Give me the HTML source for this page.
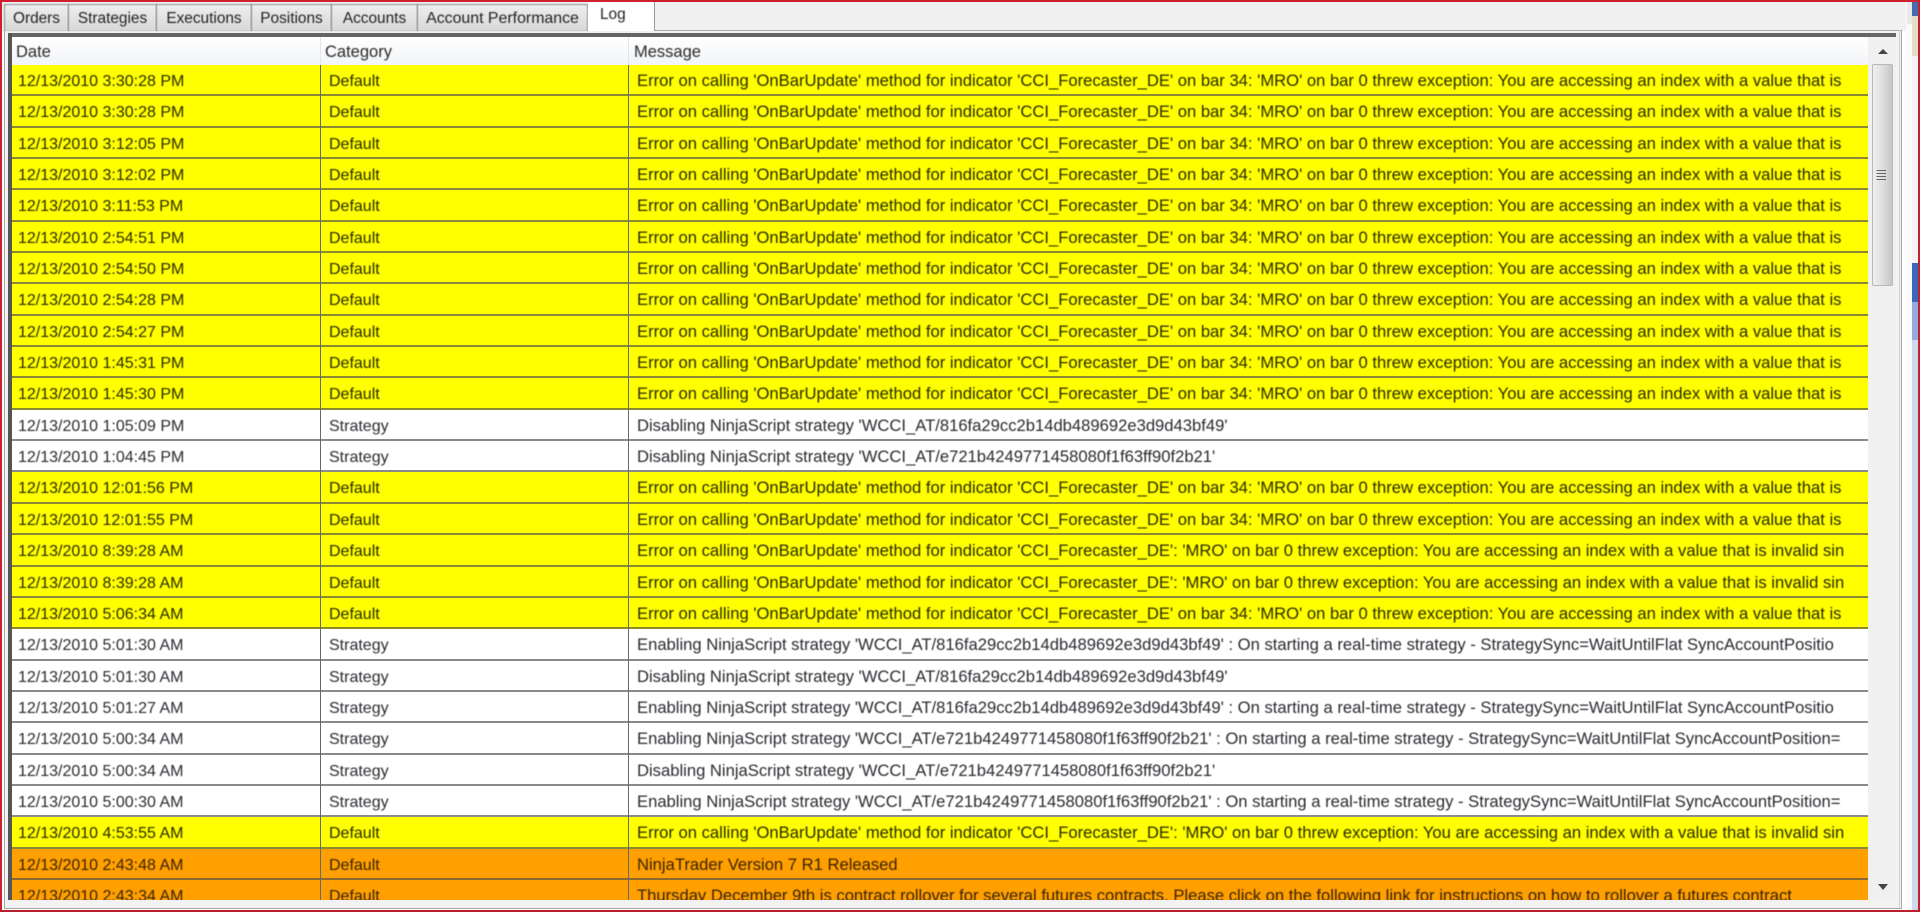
<!DOCTYPE html>
<html>
<head>
<meta charset="utf-8">
<style>
html,body{margin:0;padding:0;width:1920px;height:912px;overflow:hidden;background:#fff;}
body{position:relative;font-family:"Liberation Sans",sans-serif;font-size:16px;color:#222;}
.a{position:absolute;}
.tab{position:absolute;top:4px;height:26px;background:linear-gradient(#eeeeee,#d8d8d8);border:1px solid #8c8c8c;border-bottom:none;box-sizing:content-box;line-height:27px;text-align:center;font-size:15.4px;color:#222;filter:blur(.4px);white-space:nowrap;}
#rows{position:absolute;left:12px;top:65px;width:1856px;height:835px;overflow:hidden;}
.r{position:relative;height:31.35px;box-sizing:border-box;border-bottom:2px solid rgba(75,75,75,.65);white-space:nowrap;overflow:hidden;}
.y{background:#ffff00;}
.w{background:#fff;}
.o{background:#ffa000;}
.r span{position:absolute;top:0;line-height:33px;filter:blur(.4px);}
.y span{color:#2a2a00;}
.w span{color:#2a2a30;}
.o span{color:#3a2200;}
.r .d{left:6px;font-size:16px;}
.r .c{left:317px;font-size:16px;}
.r .m{left:625px;font-size:16.63px;line-height:32px;}
.vl{position:absolute;top:65px;width:1px;height:835px;background:#666a70;}
.h{position:absolute;top:40px;line-height:24px;font-size:16.5px;color:#2a2a2a;filter:blur(.4px);}
</style>
</head>
<body>
<!-- window background -->
<div class="a" style="left:2px;top:2px;width:1904px;height:29px;background:#f0f0f0;"></div>
<div class="a" style="left:1906px;top:2px;width:6px;height:908px;background:#fbfbfb;"></div>
<div class="a" style="left:1907px;top:2px;width:5px;height:22px;background:#e8e8e4;"></div>
<div class="a" style="left:1912px;top:2px;width:6px;height:908px;background:#cfd8ee;"></div>
<div class="a" style="left:1912px;top:2px;width:6px;height:14px;background:#4a6ab0;"></div>
<div class="a" style="left:1912px;top:16px;width:6px;height:40px;background:#e6dcc8;"></div>
<div class="a" style="left:1912px;top:56px;width:6px;height:207px;background:#f4f4f6;"></div>
<div class="a" style="left:1912px;top:263px;width:6px;height:39px;background:#3a68b8;"></div>
<div class="a" style="left:1912px;top:302px;width:6px;height:38px;background:#92abdc;"></div>

<!-- panel frame -->
<div class="a" style="left:4px;top:30px;width:1898px;height:879px;box-sizing:border-box;border:1px solid #a8a8a8;background:#f2f2f2;"></div>
<div class="a" style="left:8px;top:33px;width:1888px;height:4px;background:#666;"></div>
<div class="a" style="left:8px;top:33px;width:4px;height:867px;background:#555;"></div>
<div class="a" style="left:1899px;top:30px;width:1px;height:878px;background:#d0d0d0;"></div>

<!-- tabs -->
<div class="tab" style="left:4px;width:63px;">Orders</div>
<div class="tab" style="left:68px;width:87px;">Strategies</div>
<div class="tab" style="left:156px;width:94px;">Executions</div>
<div class="tab" style="left:251px;width:79px;">Positions</div>
<div class="tab" style="left:331px;width:85px;">Accounts</div>
<div class="tab" style="left:417px;width:169px;font-size:15.9px;">Account Performance</div>
<div class="a" style="left:588px;top:2px;width:66px;height:29px;background:#fff;border-right:1px solid #9a9a9a;"></div>
<div class="a" style="left:600px;top:3px;line-height:24px;font-size:15.4px;color:#222;filter:blur(.4px);">Log</div>

<!-- header -->
<div class="a" style="left:12px;top:37px;width:1856px;height:28px;background:linear-gradient(#ffffff,#f2f4f7);"></div>
<div class="a" style="left:320px;top:37px;width:1px;height:28px;background:#e2e6ec;"></div>
<div class="a" style="left:628px;top:37px;width:1px;height:28px;background:#e2e6ec;"></div>
<div class="h" style="left:16px;">Date</div>
<div class="h" style="left:325px;">Category</div>
<div class="h" style="left:634px;">Message</div>

<!-- rows -->
<div id="rows">
<div class="r y"><span class="d">12/13/2010 3:30:28 PM</span><span class="c">Default</span><span class="m">Error on calling 'OnBarUpdate' method for indicator 'CCI_Forecaster_DE' on bar 34: 'MRO' on bar 0 threw exception: You are accessing an index with a value that is</span></div>
<div class="r y"><span class="d">12/13/2010 3:30:28 PM</span><span class="c">Default</span><span class="m">Error on calling 'OnBarUpdate' method for indicator 'CCI_Forecaster_DE' on bar 34: 'MRO' on bar 0 threw exception: You are accessing an index with a value that is</span></div>
<div class="r y"><span class="d">12/13/2010 3:12:05 PM</span><span class="c">Default</span><span class="m">Error on calling 'OnBarUpdate' method for indicator 'CCI_Forecaster_DE' on bar 34: 'MRO' on bar 0 threw exception: You are accessing an index with a value that is</span></div>
<div class="r y"><span class="d">12/13/2010 3:12:02 PM</span><span class="c">Default</span><span class="m">Error on calling 'OnBarUpdate' method for indicator 'CCI_Forecaster_DE' on bar 34: 'MRO' on bar 0 threw exception: You are accessing an index with a value that is</span></div>
<div class="r y"><span class="d">12/13/2010 3:11:53 PM</span><span class="c">Default</span><span class="m">Error on calling 'OnBarUpdate' method for indicator 'CCI_Forecaster_DE' on bar 34: 'MRO' on bar 0 threw exception: You are accessing an index with a value that is</span></div>
<div class="r y"><span class="d">12/13/2010 2:54:51 PM</span><span class="c">Default</span><span class="m">Error on calling 'OnBarUpdate' method for indicator 'CCI_Forecaster_DE' on bar 34: 'MRO' on bar 0 threw exception: You are accessing an index with a value that is</span></div>
<div class="r y"><span class="d">12/13/2010 2:54:50 PM</span><span class="c">Default</span><span class="m">Error on calling 'OnBarUpdate' method for indicator 'CCI_Forecaster_DE' on bar 34: 'MRO' on bar 0 threw exception: You are accessing an index with a value that is</span></div>
<div class="r y"><span class="d">12/13/2010 2:54:28 PM</span><span class="c">Default</span><span class="m">Error on calling 'OnBarUpdate' method for indicator 'CCI_Forecaster_DE' on bar 34: 'MRO' on bar 0 threw exception: You are accessing an index with a value that is</span></div>
<div class="r y"><span class="d">12/13/2010 2:54:27 PM</span><span class="c">Default</span><span class="m">Error on calling 'OnBarUpdate' method for indicator 'CCI_Forecaster_DE' on bar 34: 'MRO' on bar 0 threw exception: You are accessing an index with a value that is</span></div>
<div class="r y"><span class="d">12/13/2010 1:45:31 PM</span><span class="c">Default</span><span class="m">Error on calling 'OnBarUpdate' method for indicator 'CCI_Forecaster_DE' on bar 34: 'MRO' on bar 0 threw exception: You are accessing an index with a value that is</span></div>
<div class="r y"><span class="d">12/13/2010 1:45:30 PM</span><span class="c">Default</span><span class="m">Error on calling 'OnBarUpdate' method for indicator 'CCI_Forecaster_DE' on bar 34: 'MRO' on bar 0 threw exception: You are accessing an index with a value that is</span></div>
<div class="r w"><span class="d">12/13/2010 1:05:09 PM</span><span class="c">Strategy</span><span class="m">Disabling NinjaScript strategy 'WCCI_AT/816fa29cc2b14db489692e3d9d43bf49'</span></div>
<div class="r w"><span class="d">12/13/2010 1:04:45 PM</span><span class="c">Strategy</span><span class="m">Disabling NinjaScript strategy 'WCCI_AT/e721b4249771458080f1f63ff90f2b21'</span></div>
<div class="r y"><span class="d">12/13/2010 12:01:56 PM</span><span class="c">Default</span><span class="m">Error on calling 'OnBarUpdate' method for indicator 'CCI_Forecaster_DE' on bar 34: 'MRO' on bar 0 threw exception: You are accessing an index with a value that is</span></div>
<div class="r y"><span class="d">12/13/2010 12:01:55 PM</span><span class="c">Default</span><span class="m">Error on calling 'OnBarUpdate' method for indicator 'CCI_Forecaster_DE' on bar 34: 'MRO' on bar 0 threw exception: You are accessing an index with a value that is</span></div>
<div class="r y"><span class="d">12/13/2010 8:39:28 AM</span><span class="c">Default</span><span class="m">Error on calling 'OnBarUpdate' method for indicator 'CCI_Forecaster_DE': 'MRO' on bar 0 threw exception: You are accessing an index with a value that is invalid sin</span></div>
<div class="r y"><span class="d">12/13/2010 8:39:28 AM</span><span class="c">Default</span><span class="m">Error on calling 'OnBarUpdate' method for indicator 'CCI_Forecaster_DE': 'MRO' on bar 0 threw exception: You are accessing an index with a value that is invalid sin</span></div>
<div class="r y"><span class="d">12/13/2010 5:06:34 AM</span><span class="c">Default</span><span class="m">Error on calling 'OnBarUpdate' method for indicator 'CCI_Forecaster_DE' on bar 34: 'MRO' on bar 0 threw exception: You are accessing an index with a value that is</span></div>
<div class="r w"><span class="d">12/13/2010 5:01:30 AM</span><span class="c">Strategy</span><span class="m">Enabling NinjaScript strategy 'WCCI_AT/816fa29cc2b14db489692e3d9d43bf49' : On starting a real-time strategy - StrategySync=WaitUntilFlat SyncAccountPositio</span></div>
<div class="r w"><span class="d">12/13/2010 5:01:30 AM</span><span class="c">Strategy</span><span class="m">Disabling NinjaScript strategy 'WCCI_AT/816fa29cc2b14db489692e3d9d43bf49'</span></div>
<div class="r w"><span class="d">12/13/2010 5:01:27 AM</span><span class="c">Strategy</span><span class="m">Enabling NinjaScript strategy 'WCCI_AT/816fa29cc2b14db489692e3d9d43bf49' : On starting a real-time strategy - StrategySync=WaitUntilFlat SyncAccountPositio</span></div>
<div class="r w"><span class="d">12/13/2010 5:00:34 AM</span><span class="c">Strategy</span><span class="m">Enabling NinjaScript strategy 'WCCI_AT/e721b4249771458080f1f63ff90f2b21' : On starting a real-time strategy - StrategySync=WaitUntilFlat SyncAccountPosition=</span></div>
<div class="r w"><span class="d">12/13/2010 5:00:34 AM</span><span class="c">Strategy</span><span class="m">Disabling NinjaScript strategy 'WCCI_AT/e721b4249771458080f1f63ff90f2b21'</span></div>
<div class="r w"><span class="d">12/13/2010 5:00:30 AM</span><span class="c">Strategy</span><span class="m">Enabling NinjaScript strategy 'WCCI_AT/e721b4249771458080f1f63ff90f2b21' : On starting a real-time strategy - StrategySync=WaitUntilFlat SyncAccountPosition=</span></div>
<div class="r y"><span class="d">12/13/2010 4:53:55 AM</span><span class="c">Default</span><span class="m">Error on calling 'OnBarUpdate' method for indicator 'CCI_Forecaster_DE': 'MRO' on bar 0 threw exception: You are accessing an index with a value that is invalid sin</span></div>
<div class="r o"><span class="d">12/13/2010 2:43:48 AM</span><span class="c">Default</span><span class="m">NinjaTrader Version 7 R1 Released</span></div>
<div class="r o"><span class="d">12/13/2010 2:43:34 AM</span><span class="c">Default</span><span class="m">Thursday December 9th is contract rollover for several futures contracts. Please click on the following link for instructions on how to rollover a futures contract</span></div>
</div>
<div class="vl" style="left:320px;"></div>
<div class="vl" style="left:628px;"></div>

<!-- scrollbar -->
<div class="a" style="left:1868px;top:37px;width:28px;height:863px;background:#f0f0f0;"></div>
<div class="a" style="left:1872px;top:64px;width:21px;height:222px;box-sizing:border-box;border:1px solid #b8b8b8;border-radius:2px;background:linear-gradient(90deg,#f0f0f0,#e0e0e0 45%,#c6c6ca);"></div>
<svg class="a" style="left:1868px;top:37px;" width="28" height="863" viewBox="0 0 28 863">
<path d="M10 17 L15 12 L20 17 Z" fill="#444"/>
<path d="M10 847 H20 L15 853 Z" fill="#444"/>
<path d="M8.5 133.5H18M8.5 136.5H18M8.5 139.5H18M8.5 142.5H18" stroke="#666" stroke-width="1" fill="none"/>
</svg>

<!-- red window border -->
<div class="a" style="left:0;top:0;width:1920px;height:2px;background:#d02030;"></div>
<div class="a" style="left:0;top:0;width:2px;height:912px;background:#d02030;"></div>
<div class="a" style="left:1918px;top:0;width:2px;height:912px;background:#c02030;"></div>
<div class="a" style="left:0;top:910px;width:1920px;height:2px;background:#b82030;"></div>
</body>
</html>
